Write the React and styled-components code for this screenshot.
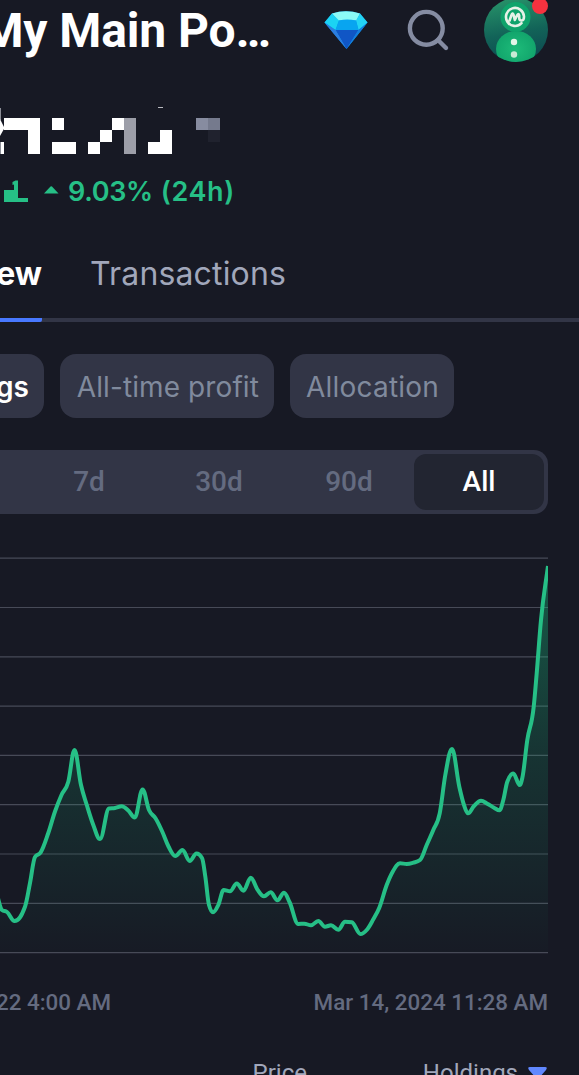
import React from 'react';
import styled, { createGlobalStyle } from 'styled-components';

const GlobalStyle = createGlobalStyle`
  * {
    box-sizing: border-box;
  }

  body {
    margin: 0;
    background: #171924;
    overflow: hidden;
  }
`;

const Page = styled.main`
  width: 579px;
  height: 1075px;
  overflow: hidden;
  background: #171924;
  color: white;
  font-family: Inter, 'Liberation Sans', sans-serif;
  display: flex;
  flex-direction: column;
`;

const Header = styled.header`
  height: 64px;
  flex: none;
  display: flex;
  align-items: flex-start;
`;

const Title = styled.h1`
  width: 271px;
  margin: 0;
  display: flex;
  justify-content: flex-end;
  flex: none;
  white-space: nowrap;
  letter-spacing: -0.1px;
  font: 700 48px/62px Roboto, sans-serif;
`;

const HeaderIcons = styled.div`
  display: flex;
  margin-left: 49px;
`;

const Balance = styled.section`
  height: 112px;
  flex: none;
  padding-top: 42px;
`;

const Change = styled.div`
  height: 32px;
  flex: none;
  display: flex;
  align-items: center;
  color: #26bf86;
  font-size: 27px;
  font-weight: 600;
  line-height: 32px;
  white-space: nowrap;
`;

const ChangeText = styled.span`
  margin-left: 8px;
  letter-spacing: ${props => props.$spacing || '0'};
`;

const Tabs = styled.nav`
  height: 114px;
  flex: none;
  display: flex;
  border-bottom: 4px solid #323546;
  margin-bottom: 32px;
`;

const Tab = styled.div`
  width: ${props => props.$width};
  height: 114px;
  padding-top: 46px;
  margin-right: 49px;
  display: flex;
  justify-content: flex-end;
  font-size: 32px;
  line-height: 40px;
  white-space: nowrap;
  letter-spacing: ${props => props.$spacing || '0'};
  font-weight: ${props => props.$active ? 700 : 400};
  color: ${props => props.$active ? 'white' : '#a1a7bb'};
  border-bottom: ${props => props.$active ? '4px solid #4878ff' : 'none'};
  border-radius: 0 0 2px 0;
`;

const Chips = styled.div`
  height: 64px;
  flex: none;
  display: flex;
  gap: 16px;
  margin-bottom: 32px;
`;

const Chip = styled.div`
  width: ${props => props.$width};
  padding: 2px 15px 0 0;
  border-radius: ${props => props.$active ? '0 16px 16px 0' : '16px'};
  display: flex;
  align-items: center;
  justify-content: flex-end;
  background: #323546;
  color: ${props => props.$active ? 'white' : '#808a9d'};
  font-size: 28px;
  font-weight: ${props => props.$active ? 600 : 400};
  letter-spacing: ${props => props.$spacing || '0'};
  white-space: nowrap;
`;

const Ranges = styled.div`
  width: 548px;
  height: 64px;
  flex: none;
  display: flex;
  padding: 4px 4px 4px 24px;
  border-radius: 0 14px 14px 0;
  background: #323546;
`;

const Range = styled.div`
  width: 130px;
  display: flex;
  align-items: center;
  justify-content: center;
  border-radius: 12px;
  font: 500 28px/56px Roboto, sans-serif;
  color: ${props => props.$active ? 'white' : '#646b80'};
  background: ${props => props.$active ? '#222531' : 'transparent'};
`;

const Chart = styled.svg`
  display: block;
  flex: none;
  margin-top: 36px;
`;

const Dates = styled.div`
  width: 548px;
  height: 28px;
  flex: none;
  margin-top: 28px;
  display: flex;
  justify-content: space-between;
  font: 500 22.4px/28px Roboto, sans-serif;
  color: #646b80;
  white-space: nowrap;
`;

const StartDate = styled.span`
  width: 111px;
  display: flex;
  justify-content: flex-end;
`;

const TableHead = styled.div`
  width: 548px;
  margin-top: 43px;
  flex: none;
  display: flex;
  font: 400 24px/28px Roboto, sans-serif;
  color: #a1a7bb;
  white-space: nowrap;
`;

const HeadCell = styled.div`
  width: ${props => props.$width};
  flex: none;
  display: flex;
  justify-content: flex-end;
`;

const SortArrow = styled.svg`
  margin: 7px 0 0 9px;
`;

const points = [
  [-3, 895], [2, 910], [7, 912], [14.5, 921], [25, 906.7], [30, 883], [35, 857], [40.7, 852.3],
  [48.3, 833], [55, 811.5], [61.5, 795], [68.3, 781.7], [74.5, 750], [81, 785], [86.8, 805],
  [93.3, 825], [100, 839], [109, 808.5], [115, 808], [121.7, 806.3], [128.3, 810.5], [134.8, 817.5],
  [142.6, 789.4], [149, 810], [155.5, 818.3], [162.2, 831.5], [168.5, 846.5], [175.3, 856],
  [182.5, 850], [189.7, 861], [196.5, 853.6], [202, 858], [205.3, 876.5], [209, 905], [213, 912.3],
  [218.3, 905], [223.7, 890], [230, 891.3], [236.8, 883.4], [243.4, 890.7], [250.8, 877.8],
  [257.3, 889.3], [264, 896.3], [270.7, 892.3], [277.4, 900.3], [284, 892.7], [289.5, 902],
  [298.3, 924], [304.3, 923.7], [311, 925.3], [318.3, 921], [325, 926.7], [331, 925.3],
  [338.3, 929.7], [345, 921.7], [351.7, 922.3], [360.5, 934], [366.7, 930], [373.3, 919.3],
  [379.3, 907.7], [386.7, 885], [392.7, 871.7], [400, 863.3], [406.7, 864], [413.3, 862.7],
  [420, 860], [426.7, 845], [433.3, 830], [439.7, 813.3], [445.3, 775], [452, 749],
  [459.3, 786.7], [464, 805], [468, 813.3], [474, 806], [481, 800.7], [487.3, 803.7],
  [494, 807.7], [499.5, 810.3], [503.3, 800], [507.3, 781.7], [513.3, 773.5], [519.7, 785],
  [522.3, 778], [527.3, 740], [533.7, 706.7], [536.7, 673.3], [541, 620], [548, 566],
];

// monotone cubic interpolation, keeps peaks on the data points
function linePath(data) {
  const n = data.length;
  const slope = data.slice(1).map((p, i) => (p[1] - data[i][1]) / (p[0] - data[i][0]));
  const tangent = data.map((p, i) => {
    if (i === 0) return slope[0];
    if (i === n - 1) return slope[n - 2];
    const a = slope[i - 1];
    const b = slope[i];
    if (a * b <= 0) return 0;
    const h0 = p[0] - data[i - 1][0];
    const h1 = data[i + 1][0] - p[0];
    const mean = (a * h1 + b * h0) / (h0 + h1);
    return Math.sign(a) * Math.min(2 * Math.abs(a), 2 * Math.abs(b), Math.abs(mean));
  });
  let d = `M${data[0][0]} ${data[0][1]}`;
  for (let i = 1; i < n; i++) {
    const [x0, y0] = data[i - 1];
    const [x1, y1] = data[i];
    const h = (x1 - x0) / 2.7;
    d += `C${x0 + h} ${y0 + tangent[i - 1] * h} ${x1 - h} ${y1 - tangent[i] * h} ${x1} ${y1}`;
  }
  return d;
}

const line = linePath(points);

const blocks = [
  [4, 118, 36, 12], [28, 130, 12, 24], [1, 142, 3, 12], [52, 118, 12, 12], [52, 142, 24, 12],
  [112, 118, 12, 12], [100, 130, 12, 12], [88, 142, 12, 12], [124, 118, 12, 36, '#9c9ea8'],
  [160, 130, 12, 12], [148, 142, 24, 12], [196, 118, 12, 12, '#878ca0'],
  [208, 118, 12, 12, '#757a8d'], [208, 130, 12, 12, '#20222e'],
  [0, 108, 1, 12, '#8b8d96'], [0, 142, 1, 12, '#8b8d96'],
];

const DiamondIcon = () => (
  <svg width="52" height="64" viewBox="320 0 52 64">
    <path d="M324.5 22.5L332 13.5Q346 9 360 13.5L367.5 22.5L346.5 49Z" fill="#0797e8" />
    <path d="M332 13.5Q346 9 360 13.5L356.5 20.5H338Z" fill="#8bfaf6" />
    <path d="M332 13.5L339 20.5L335.5 30L324.5 22.5Z" fill="#1bd3f3" />
    <path d="M360 13.5L356 20.5L358.5 30L367.5 22.5Z" fill="#24d4f5" />
    <path d="M339 20.5Q347 18.5 356 20.5L358.5 30H335.5Z" fill="#08a5f0" />
    <path d="M335.5 30H358.5L346.5 49Z" fill="#1056c5" />
    <path d="M324.5 22.5L335.5 30L346.5 49Z" fill="#2d7de0" />
    <path d="M367.5 22.5L358.5 30L346.5 49Z" fill="#147ddd" />
  </svg>
);

const SearchIcon = () => (
  <svg width="108" height="64" viewBox="372 0 108 64" fill="none" stroke="#858ca2" strokeWidth="4.4" strokeLinecap="round">
    <circle cx="426.3" cy="28.3" r="16.4" />
    <path d="M438 40L446 48" />
  </svg>
);

const Avatar = () => (
  <svg width="72" height="66" viewBox="480 0 72 66">
    <defs>
      <linearGradient id="avatarBg" x1="0" y1="0" x2="0.2" y2="1">
        <stop offset="0" stopColor="#2b9b6c" />
        <stop offset="0.6" stopColor="#126358" />
        <stop offset="1" stopColor="#0d4a50" />
      </linearGradient>
      <radialGradient id="snow">
        <stop offset="0" stopColor="#1dbb79" />
        <stop offset="1" stopColor="#12a56c" />
      </radialGradient>
      <clipPath id="round">
        <circle cx="516" cy="30" r="32" />
      </clipPath>
    </defs>
    <g clipPath="url(#round)">
      <rect x="480" y="-4" width="72" height="70" fill="url(#avatarBg)" />
      <ellipse cx="516" cy="49" rx="20" ry="18" fill="url(#snow)" />
      <circle cx="515.5" cy="17" r="15" fill="#0fa36b" />
    </g>
    <path
      d="M521.5 23.2A9 9 0 1 1 524 16.5Q524 20.5 521.3 20.5Q519.2 20.5 519.2 17.5V15.5Q518.8 12.5 517 15.5L514.8 20L513.6 15Q512.6 12 511.3 15.5L509.6 20.5"
      fill="none"
      stroke="#e6f1e7"
      strokeWidth="2.6"
      strokeLinecap="round"
      strokeLinejoin="round"
    />
    <circle cx="514" cy="42" r="3.2" fill="#e3f6e8" />
    <circle cx="514" cy="54.5" r="3.2" fill="#c9ead6" />
    <circle cx="540" cy="6" r="8" fill="#f6323f" />
  </svg>
);

const PortfolioChart = () => (
  <Chart width="579" height="410" viewBox="0 550 579 410">
    <defs>
      <linearGradient id="area" gradientUnits="userSpaceOnUse" x1="0" y1="566" x2="0" y2="952">
        <stop offset="0" stopColor="#16c784" stopOpacity="0.38" />
        <stop offset="0.5" stopColor="#16c784" stopOpacity="0.15" />
        <stop offset="1" stopColor="#16c784" stopOpacity="0.01" />
      </linearGradient>
      <clipPath id="plot">
        <rect x="0" y="550" width="548" height="410" />
      </clipPath>
    </defs>
    {Array.from({ length: 9 }, (_, i) => (
      <path key={i} d={`M0 ${558.2 + i * 49.3}H548`} stroke="#474a57" strokeWidth="1.2" />
    ))}
    <g clipPath="url(#plot)">
      <path d={`${line}V952H-3Z`} fill="url(#area)" />
      <path d={line} fill="none" stroke="#26bf86" strokeWidth="4" strokeLinejoin="round" />
    </g>
  </Chart>
);

const App = () => (
  <>
    <GlobalStyle />
    <Page>
      <Header>
        <Title>My Main Po…</Title>
        <HeaderIcons>
          <DiamondIcon />
          <SearchIcon />
          <Avatar />
        </HeaderIcons>
      </Header>

      <Balance>
        <svg width="240" height="52" viewBox="0 106 240 52">
          {blocks.map(([x, y, w, h, fill]) => (
            <rect key={`${x}-${y}`} x={x} y={y} width={w} height={h} fill={fill || 'white'} />
          ))}
          <path d="M0 119L4.5 128L0 136Z" fill="white" />
          <path d="M158 107H163V108H158Z" fill="#b9bac0" />
        </svg>
      </Balance>

      <Change>
        <svg width="60" height="32" viewBox="0 176 60 32" fill="#26bf86">
          <path d="M4 190H14V184.5L12.5 185V182L15.5 180.5H18V198H28V202H4Z" />
          <path d="M44 193.5L50.5 186.5Q51.2 186 52 186.5L58.5 193.5Z" />
        </svg>
        <ChangeText $spacing="-0.35px">9.03%</ChangeText>
        <ChangeText $spacing="0.6px">(24h)</ChangeText>
      </Change>

      <Tabs>
        <Tab $active $width="42px">Overview</Tab>
        <Tab $width="195px" $spacing="0.15px">Transactions</Tab>
      </Tabs>

      <Chips>
        <Chip $active $width="44px">Holdings</Chip>
        <Chip $width="214px" $spacing="0.1px">All-time profit</Chip>
        <Chip $width="164px" $spacing="0.2px">Allocation</Chip>
      </Chips>

      <Ranges>
        <Range>7d</Range>
        <Range>30d</Range>
        <Range>90d</Range>
        <Range $active>All</Range>
      </Ranges>

      <PortfolioChart />

      <Dates>
        <StartDate>22 4:00 AM</StartDate>
        <span>Mar 14, 2024 11:28 AM</span>
      </Dates>

      <TableHead>
        <HeadCell $width="307px">Price</HeadCell>
        <HeadCell $width="211px">Holdings</HeadCell>
        <SortArrow width="21" height="14" viewBox="0 0 21 14" fill="#6188ff">
          <path d="M3 1H18Q21 1 19 4L12 12Q10.5 14 9 12L2 4Q0 1 3 1Z" />
        </SortArrow>
      </TableHead>
    </Page>
  </>
);

export default App;
